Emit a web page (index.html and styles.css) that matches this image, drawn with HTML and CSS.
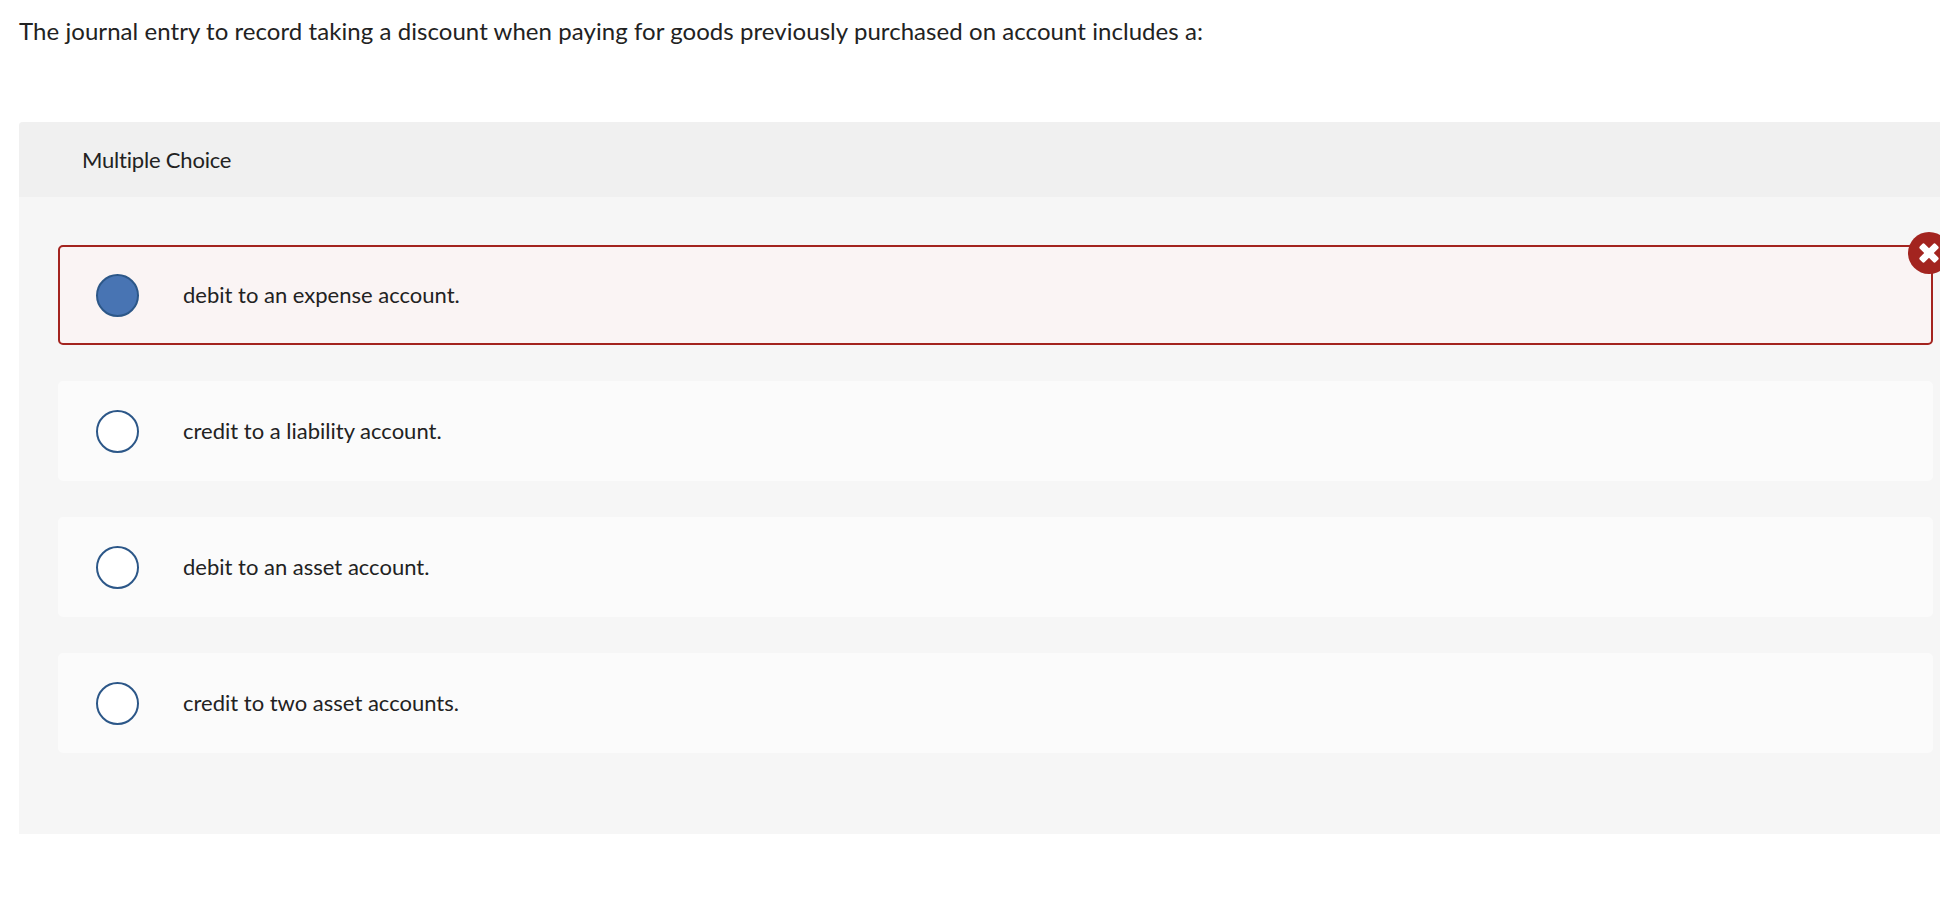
FILE: index.html
```
<!DOCTYPE html>
<html lang="en">
<head>
    <meta charset="UTF-8">
    <meta name="viewport" content="width=device-width, initial-scale=1.0">
    <title>Multiple Choice</title>
    <link rel="stylesheet" href="styles.css">
</head>
<body>
<main class="page">
    <p class="question">The journal entry to record taking a discount when paying for goods previously purchased on account includes a:</p>

    <section class="panel">
        <h2 class="panel-header">Multiple Choice</h2>
        <ul class="options">
            <li class="option incorrect">
                <span class="radio selected"></span>
                <span class="label">debit to an expense account.</span>
                <span class="badge">
                    <svg width="42" height="42" viewBox="0 0 42 42" fill="#fff">
                        <rect x="9.8" y="17.6" width="22.4" height="6.8" rx="1.8" transform="rotate(45 21 21)"/>
                        <rect x="9.8" y="17.6" width="22.4" height="6.8" rx="1.8" transform="rotate(-45 21 21)"/>
                    </svg>
                </span>
            </li>
            <li class="option">
                <span class="radio"></span>
                <span class="label">credit to a liability account.</span>
            </li>
            <li class="option">
                <span class="radio"></span>
                <span class="label">debit to an asset account.</span>
            </li>
            <li class="option">
                <span class="radio"></span>
                <span class="label">credit to two asset accounts.</span>
            </li>
        </ul>
    </section>
</main>
</body>
</html>
```
FILE: styles.css
```
* { box-sizing: border-box; }
body { margin: 0; background: #fff; color: #222; font-family: Lato, "Liberation Sans", sans-serif; font-variant-ligatures: none; overflow: hidden; }
.page { padding: 16px 0 0 19px; }
.question { margin: 0 0 76px; font-size: 24px; letter-spacing: 0.06px; line-height: 30px; white-space: nowrap; }
.panel { height: 712px; background: #f6f6f6; border-radius: 4px 0 0 0; }
.panel-header { margin: 0; height: 75px; padding: 0 63px; background: #f0f0f0; border-radius: 4px 0 0 0; font-size: 22px; font-weight: 400; letter-spacing: -0.2px; line-height: 76px; }
.options { display: flex; flex-direction: column; gap: 36px; list-style: none; margin: 0; padding: 48px 7px 0 39px; }
.option { position: relative; display: flex; align-items: center; gap: 44px; height: 100px; padding: 0 36px; border: 2px solid #fbfbfb; border-radius: 5px; background: #fbfbfb; font-size: 22px; }
.option.incorrect { border-color: #a3241f; background: #faf4f4; }
.radio { flex: none; width: 43px; height: 43px; border: 2px solid #2c5788; border-radius: 50%; background: #fff; }
.radio.selected { background: #4874b3; }
.label { padding-bottom: 1px; white-space: nowrap; }
.badge { position: absolute; top: -15px; right: -19px; width: 42px; height: 42px; border-radius: 50%; background: #a3241f; }
.badge svg { display: block; }
```
